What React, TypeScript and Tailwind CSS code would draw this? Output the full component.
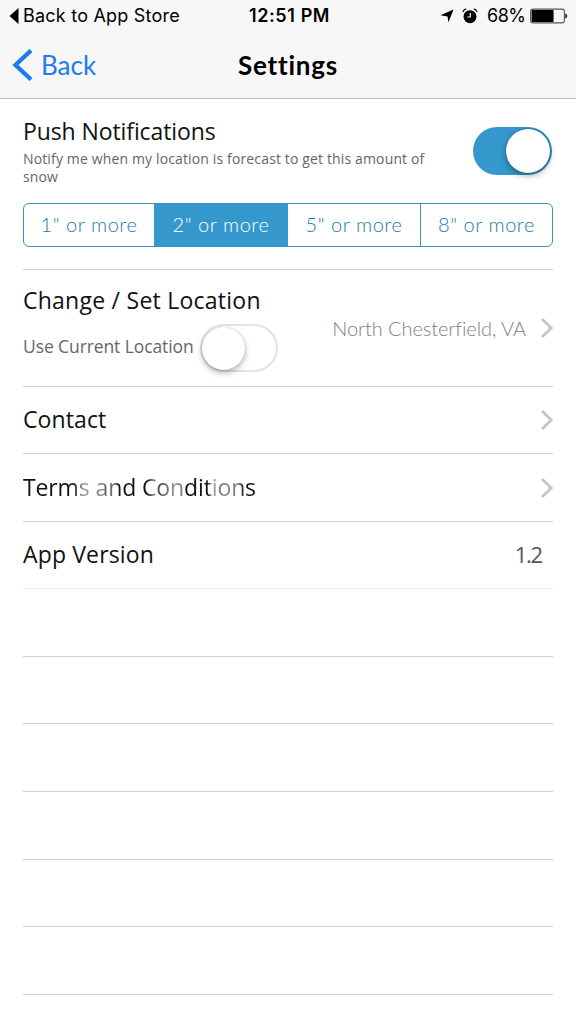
import clsx from "clsx";

const thresholds = [
  { label: '1" or more', width: "w-[130px]" },
  { label: '2" or more', width: "w-[134px]" },
  { label: '5" or more', width: "w-[132px]" },
  { label: '8" or more', width: "w-[132px]" },
];

const emptyRows = ["h-[68px]", "h-[67px]", "h-[68px]", "h-[68px]", "h-[67px]", "h-[68px]"];

function Chevron() {
  return (
    <svg width="12" height="20" viewBox="0 0 12 20" fill="none" className="shrink-0">
      <path d="M1 1L10.3 10L1 19" stroke="#c4c4c6" strokeWidth="2.7" />
    </svg>
  );
}

function StatusBar() {
  return (
    <div className="flex h-8 items-center text-[18px] leading-8">
      <div className="flex w-[249px] items-center pl-[9px]">
        <svg width="10" height="16" viewBox="0 0 10 16">
          <path d="M9.5 0V16L0.5 8Z" fill="#000" />
        </svg>
        <span className="ml-[4px] whitespace-nowrap text-[18px] tracking-[0.22px]">Back to App Store</span>
      </div>
      <span className="w-[191px] whitespace-nowrap font-semibold tracking-[0.6px]">12:51 PM</span>
      <svg width="14" height="14" viewBox="0 0 14 14" className="shrink-0">
        <path d="M13.5 0.5L8.4 13.5L7.6 7.4L0.5 6.2Z" fill="#000" />
      </svg>
      <svg width="16" height="16" viewBox="0 0 16 16" fill="none" className="ml-[8px] shrink-0">
        <circle cx="8" cy="8.7" r="6.5" fill="#000" />
        <path d="M8.3 4.9V9H5.4" stroke="#f7f7f7" strokeWidth="1.2" />
        <path d="M0.8 4C1.3 2.5 2.5 1.3 4.2 0.9M15.2 4C14.7 2.5 13.5 1.3 11.8 0.9" stroke="#000" strokeWidth="1.1" />
      </svg>
      <span className="ml-[9px] w-[43px] whitespace-nowrap tracking-[-0.5px]">68%</span>
      <svg width="38" height="16" viewBox="0 0 38 16" fill="none" className="shrink-0">
        <rect x="0.6" y="1.1" width="33.8" height="13.8" rx="2.5" stroke="#555" strokeWidth="1.1" />
        <rect x="1.6" y="2.1" width="22" height="11.8" rx="0.8" fill="#000" />
        <path d="M35.3 5.5C37.8 6 37.8 10 35.3 10.5Z" fill="#222" />
      </svg>
    </div>
  );
}

function NavBar() {
  return (
    <div className="grid h-[66px] grid-cols-[1fr_auto_1fr] items-center">
      <div className="flex items-center pl-3 text-[#1b7ced]">
        <svg width="21" height="32" viewBox="0 0 21 32" fill="none">
          <path d="M19 1.5L3.5 16L19 30.5" stroke="currentColor" strokeWidth="4.3" />
        </svg>
        <span className="ml-[8px] font-[Lato] text-[26px] leading-8">Back</span>
      </div>
      <h1 className="font-[Lato] text-[26px] font-bold leading-8 tracking-[0.8px] text-black">Settings</h1>
      <span />
    </div>
  );
}

function Toggle({ on = false }: { on?: boolean }) {
  return (
    <div
      className={clsx(
        "flex h-[48px] shrink-0 items-center rounded-full",
        on ? "w-[79px] justify-end bg-[#3498cc] px-[2px]" : "w-[78px] border-2 border-[#e3e3e3] bg-white",
      )}
    >
      <div
        className={clsx(
          "rounded-full bg-white",
          on
            ? "size-[44px] shadow-[0_3px_6px_rgba(0,0,0,0.3),0_0_2px_rgba(0,0,0,0.4)]"
            : "size-[43px] shadow-[0_3px_6px_rgba(0,0,0,0.3),0_0_1px_rgba(0,0,0,0.3)]",
        )}
      />
    </div>
  );
}

function Row({ title, height, titleClass, children }: { title: string; height: string; titleClass: string; children: React.ReactNode }) {
  return (
    <div className={clsx("flex items-center justify-between border-b border-[#cfcfcf]", height)}>
      <span className={clsx("-mt-[2px] text-[23px] leading-8", titleClass)}>{title}</span>
      {children}
    </div>
  );
}

export default function App() {
  return (
    <div className="h-[1024px] w-[576px] overflow-hidden bg-white font-['Open_Sans',sans-serif] text-[#111]">
      <header className="h-[99px] border-b border-[#bcbcbc] bg-[#f7f7f7] font-[Inter,sans-serif] text-black">
        <StatusBar />
        <NavBar />
      </header>

      <main className="px-[23px]">
        <section className="h-[171px] border-b border-[#cfcfcf] pt-[16px]">
          <div className="flex h-[88px] justify-between">
            <div className="w-[430px]">
              <h2 className="text-[23px] leading-8 tracking-[-0.1px]">Push Notifications</h2>
              <p className="mt-[3px] text-[14px] leading-[18px] tracking-[0.14px] text-[#666]">
                Notify me when my location is forecast to get this amount of
                <br />
                snow
              </p>
            </div>
            <div className="mt-[12px] mr-[1px]">
              <Toggle on />
            </div>
          </div>
          <div className="flex h-[44px] overflow-hidden rounded-[6px] border-[1.5px] border-[#3b91b9] font-[Lato] text-[20px] font-light text-[#1f7ba8]">
            {thresholds.map((item, index) => (
              <div
                key={item.label}
                className={clsx(
                  "flex shrink-0 items-center justify-center whitespace-nowrap pb-[2px] tracking-[0.55px]",
                  item.width,
                  index === 1 && "bg-[#3498cc] text-white",
                  index === 3 && "border-l-[1.5px] border-[#3b91b9]",
                )}
              >
                {item.label}
              </div>
            ))}
          </div>
        </section>

        <section className="flex h-[117px] items-center justify-between border-b border-[#cfcfcf]">
          <div className="h-full pt-[14px]">
            <h2 className="text-[23px] leading-8 tracking-[0.25px]">Change / Set Location</h2>
            <div className="mt-[8px] flex items-center">
              <span className="-mt-[3px] w-[177px] whitespace-nowrap text-[17.5px] tracking-[-0.1px] text-[#666]">Use Current Location</span>
              <Toggle />
            </div>
          </div>
          <div className="flex items-center">
            <span className="mr-[15px] whitespace-nowrap font-[Lato] text-[20px] font-light tracking-[-0.08px] text-[#808080]">North Chesterfield, VA</span>
            <Chevron />
          </div>
        </section>

        <Row title="Contact" height="h-[67px]" titleClass="tracking-[0.1px]">
          <Chevron />
        </Row>
        <Row
          title="Terms and Conditions"
          height="h-[68px]"
          titleClass="tracking-[-0.12px] bg-clip-text text-transparent bg-[linear-gradient(90deg,#111_48px,#444_54px,#999_60px,#999_66px,#888_74px,#888_80px,#555_84px,#777_90px,#111_97px,#111_124px,#888_131px,#444_137px,#777_145px,#999_152px,#888_158px,#111_163px,#111_184px,#aaa_190px,#777_196px,#888_206px,#777_215px,#111_222px)]"
        >
          <Chevron />
        </Row>
        <div className="flex h-[67px] items-center justify-between border-b border-[#ececec]">
          <span className="-mt-[2px] text-[23px] leading-8 tracking-[0.15px]">App Version</span>
          <span className="-mt-[2px] mr-[11px] text-[22px] tracking-[-1.2px] text-[#555]">1.2</span>
        </div>
        {emptyRows.map((height, index) => (
          <div key={index} className={clsx("border-b border-[#cfcfcf]", height)} />
        ))}
      </main>
    </div>
  );
}
